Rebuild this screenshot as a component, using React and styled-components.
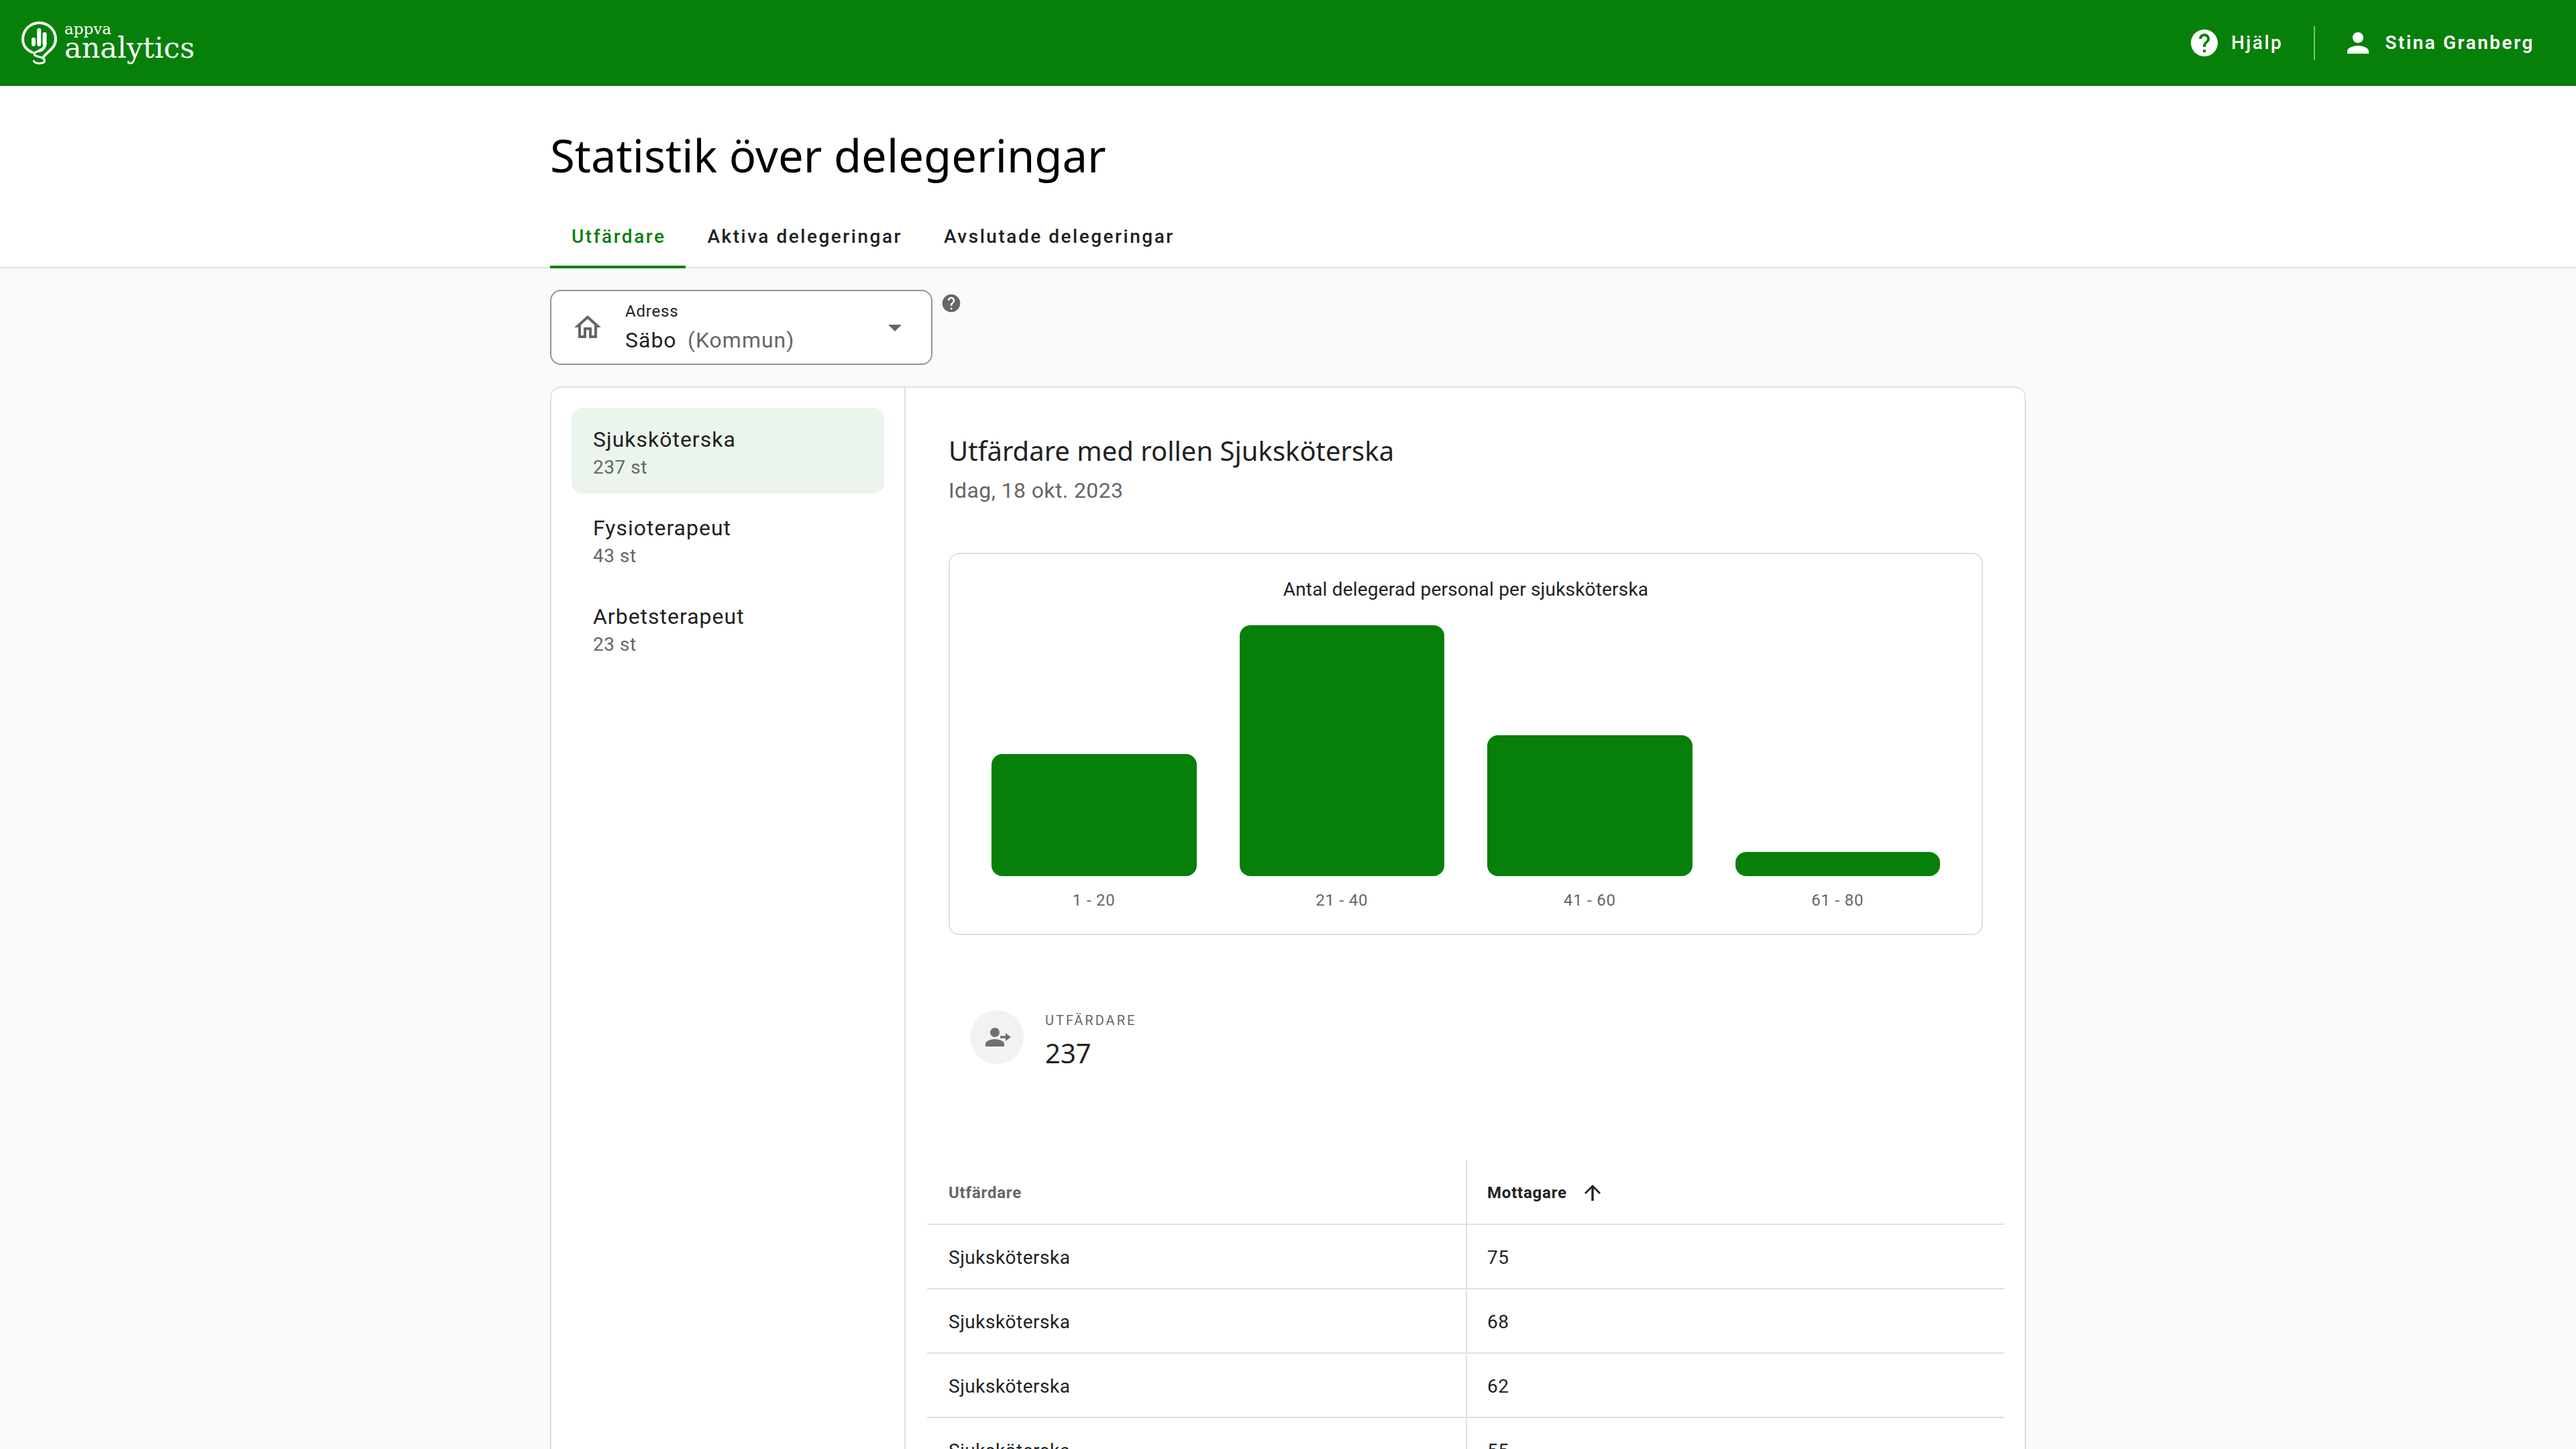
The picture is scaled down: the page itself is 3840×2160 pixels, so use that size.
import React from "react";
import styled, { createGlobalStyle } from "styled-components";
import { MdArrowDropDown, MdHelp, MdOutlineHome, MdPerson } from "react-icons/md";

const color = {
  brand: "#07800a",
  brandDark: "#06700a",
  line: "#e0e0e0",
  text: "#212121",
  muted: "#666666",
  page: "#fafafa",
  selected: "#ebf5eb",
};

const body = `Roboto, "Liberation Sans", sans-serif`;
const display = `"Noto Sans", "Open Sans", sans-serif`;

const GlobalStyle = createGlobalStyle`
  *, *::before, *::after { box-sizing: border-box; }
  html, body { margin: 0; background: ${color.page}; }
  body { font-family: ${body}; color: ${color.text}; }
  button, select { font: inherit; color: inherit; letter-spacing: inherit; border: 0; background: none; padding: 0; cursor: pointer; }
  h1, h2, h3, p, dl, dt, dd, figure, ul { margin: 0; padding: 0; }
  svg { display: block; flex: none; }
`;

const Page = styled.div`
  display: flex;
  flex-direction: column;
  height: 100vh;
  overflow: hidden auto;
  scrollbar-width: none;
`;

const TopBar = styled.header`
  display: flex;
  flex: none;
  align-items: center;
  justify-content: space-between;
  height: 128px;
  padding: 0 62px 0 32px;
  background: ${color.brand};
  box-shadow: inset 0 -2px ${color.brandDark};
  color: #fff;
`;

const Logo = styled.a`
  display: flex;
  gap: 10px;
  color: inherit;
  text-decoration: none;
  font-family: "DejaVu Serif", "Liberation Serif", serif;
`;

const LogoName = styled.span`
  display: flex;
  flex-direction: column;
`;

const LogoSmall = styled.span`
  font-size: 23px;
  line-height: 22px;
`;

const LogoLarge = styled.span`
  font-size: 43px;
  line-height: 34px;
`;

const UserNav = styled.nav`
  display: flex;
  align-items: center;
`;

const NavButton = styled.button`
  display: flex;
  align-items: center;
  gap: 16px;
  font-size: 28px;
  line-height: 48px;
  font-weight: ${(p) => (p.$strong ? 600 : 500)};
  letter-spacing: 0.09em;
`;

const NavDivider = styled.span`
  width: 2px;
  height: 50px;
  margin: 0 40px 0 46px;
  background: rgba(255, 255, 255, 0.5);
`;

const Container = styled.div`
  width: 100%;
  max-width: 2264px;
  margin: 0 auto;
  padding: 0 32px;
`;

const PageHead = styled.div`
  flex: none;
  padding-top: 64px;
  background: #fff;
  box-shadow: inset 0 -2px ${color.line};
`;

const PageTitle = styled.h1`
  font: 400 67px/78px ${display};
  color: #000;
`;

const Tabs = styled.div`
  display: flex;
  margin-top: 34px;
`;

const Tab = styled.button`
  height: 96px;
  padding: 0 30px 0 32px;
  font-size: 28px;
  font-weight: 500;
  letter-spacing: 0.09em;
  color: ${(p) => (p.$active ? color.brand : color.text)};
  box-shadow: inset 0 ${(p) => (p.$active ? "-4px" : "0")} ${color.brand};
`;

const Main = styled.main`
  padding: 32px 0;
`;

const FilterRow = styled.div`
  display: flex;
  gap: 12px;
  align-items: flex-start;
`;

const SelectField = styled.div`
  display: grid;
  grid-template-columns: 48px 1fr 48px;
  column-gap: 32px;
  align-items: center;
  width: 570px;
  height: 112px;
  padding: 0 30px;
  border: 2px solid #949494;
  border-radius: 16px;
  background: #fff;
  color: ${color.muted};
`;

const SelectBody = styled.div`
  display: flex;
  flex-direction: column;
  gap: 8px;
`;

const SelectLabel = styled.label`
  font-size: 24px;
  line-height: 30px;
  letter-spacing: 0.033em;
  color: ${color.text};
`;

const SelectValue = styled.div`
  display: flex;
  gap: 16px;
  font-size: 32px;
  line-height: 40px;
  letter-spacing: 0.031em;
`;

const Select = styled.select`
  appearance: none;
  height: 40px;
  color: ${color.text};
`;

const HelpButton = styled.button`
  margin-top: 4px;
  color: ${color.muted};
`;

const Panel = styled.section`
  display: grid;
  grid-template-columns: 528px 1fr;
  margin-top: 32px;
  border: 2px solid ${color.line};
  border-radius: 16px;
  background: #fff;
`;

const RoleList = styled.ul`
  display: flex;
  flex-direction: column;
  gap: 4px;
  padding: 30px;
  border-right: 2px solid ${color.line};
  list-style: none;
`;

const RoleButton = styled.button`
  display: flex;
  flex-direction: column;
  width: 100%;
  padding: 26px 32px 18px;
  border-radius: 16px;
  text-align: left;
  background: ${(p) => (p.$selected ? color.selected : "none")};
`;

const RoleName = styled.span`
  font-size: 32px;
  line-height: 42px;
  letter-spacing: 0.031em;
`;

const RoleCount = styled.span`
  font-size: 28px;
  line-height: 42px;
  letter-spacing: 0.018em;
  color: ${color.muted};
`;

const Content = styled.div`
  padding: 66px 30px 64px 32px;
`;

const Summary = styled.div`
  padding: 0 32px;
`;

const SectionTitle = styled.h2`
  font: 400 40px/56px ${display};
`;

const DateLine = styled.p`
  margin-top: 10px;
  font-size: 32px;
  line-height: 42px;
  letter-spacing: 0.012em;
  color: ${color.muted};
`;

const ChartCard = styled.figure`
  margin-top: 72px;
  padding: 32px 62px 34px;
  border: 2px solid ${color.line};
  border-radius: 16px;
`;

const ChartTitle = styled.figcaption`
  font-size: 28px;
  line-height: 42px;
  letter-spacing: 0.007em;
  text-align: center;
`;

const Bars = styled.div`
  display: grid;
  grid-template-columns: repeat(4, 1fr);
  column-gap: 64px;
  margin-top: 32px;
`;

const BarColumn = styled.div`
  display: flex;
  flex-direction: column;
  gap: 20px;
`;

const BarTrack = styled.div`
  display: flex;
  align-items: flex-end;
  height: 374px;
`;

const Bar = styled.div`
  width: 100%;
  border-radius: 16px;
  background: ${color.brand};
`;

const BarLabel = styled.span`
  font-size: 24px;
  line-height: 32px;
  letter-spacing: 0.033em;
  text-align: center;
  color: ${color.muted};
`;

const Stat = styled.div`
  display: flex;
  align-items: flex-start;
  gap: 32px;
  margin-top: 112px;
  padding-left: 32px;
`;

const StatIcon = styled.span`
  width: 80px;
  height: 80px;
  border-radius: 50%;
  background: #f2f2f2;
  color: #707070;
`;

const StatText = styled.dl`
  display: flex;
  flex-direction: column;
  gap: 8px;
`;

const StatLabel = styled.dt`
  font-size: 20px;
  line-height: 30px;
  letter-spacing: 0.15em;
  text-transform: uppercase;
  color: ${color.muted};
`;

const StatValue = styled.dd`
  font: 400 40px/52px ${display};
`;

const Table = styled.table`
  width: 100%;
  margin-top: 134px;
  table-layout: fixed;
  border-collapse: separate;
  border-spacing: 0;
  text-align: left;

  th, td {
    height: 96px;
    padding: 2px 32px 0;
    border-bottom: 2px solid ${color.line};
  }
  th + th, td + td {
    padding-left: 30px;
    border-left: 2px solid ${color.line};
  }
`;

const HeadCell = styled.th`
  font-size: 24px;
  font-weight: 700;
  letter-spacing: 0.033em;
  color: ${(p) => (p.$sorted ? color.text : color.muted)};
`;

const SortButton = styled.button`
  display: flex;
  align-items: center;
  gap: 26px;
`;

const Cell = styled.td`
  font-size: 28px;
  letter-spacing: 0.018em;
`;

const LogoMark = () => (
  <svg width="54" height="64" viewBox="8 8 54 64" fill="none" stroke="currentColor" strokeLinecap="round">
    <path strokeWidth="4" d="M40.500 61.500C46 53 59 48 59 34.500A24.500 24.500 0 1 0 10 34.500C10 44 16 50.500 24 54" />
    <path strokeWidth="6" d="M26 35v7M34.200 21v21M42.500 27v14" />
    <path strokeWidth="4.500" d="M43.300 40C43.300 47 40 50 35 51.500" />
    <path strokeWidth="3" d="M37 51C31 53 27 53.500 27 56.500C27 61.500 42.500 60 42.500 66C42.500 72 28 71.500 26.500 67" />
  </svg>
);

const AssignIcon = () => (
  <svg width="80" height="80" viewBox="0 0 80 80" fill="currentColor">
    <circle cx="37" cy="33" r="7" />
    <path d="M23 54v-4c0-4.600 9.300-7 14-7s14 2.400 14 7v4z" />
    <path d="M45 38.300h8V34l8 6-8 6v-4.200h-8z" />
  </svg>
);

const SortArrow = () => (
  <svg width="24" height="24" viewBox="0 0 24 24" fill="none" stroke="currentColor">
    <path strokeWidth="2.800" d="M1 13L12 2L23 13" />
    <path strokeWidth="3.400" d="M12 2V24" />
  </svg>
);

const tabs = ["Utfärdare", "Aktiva delegeringar", "Avslutade delegeringar"];

const roles = [
  { name: "Sjuksköterska", count: 237 },
  { name: "Fysioterapeut", count: 43 },
  { name: "Arbetsterapeut", count: 23 },
];

const groups = [
  { label: "1 - 20", value: 182 },
  { label: "21 - 40", value: 374 },
  { label: "41 - 60", value: 210 },
  { label: "61 - 80", value: 36 },
];
const largest = Math.max(...groups.map((g) => g.value));

const rows = [75, 68, 62, 55];

export default function App() {
  return (
    <Page>
      <GlobalStyle />
      <TopBar>
        <Logo href="#">
          <LogoMark />
          <LogoName>
            <LogoSmall>appva</LogoSmall>
            <LogoLarge>analytics</LogoLarge>
          </LogoName>
        </Logo>
        <UserNav>
          <NavButton>
            <MdHelp size={48} />
            Hjälp
          </NavButton>
          <NavDivider />
          <NavButton $strong>
            <MdPerson size={48} />
            Stina Granberg
          </NavButton>
        </UserNav>
      </TopBar>

      <PageHead>
        <Container>
          <PageTitle>Statistik över delegeringar</PageTitle>
          <Tabs role="tablist">
            {tabs.map((tab, i) => (
              <Tab key={tab} role="tab" aria-selected={i === 0} $active={i === 0}>
                {tab}
              </Tab>
            ))}
          </Tabs>
        </Container>
      </PageHead>

      <Main>
        <Container>
          <FilterRow>
            <SelectField>
              <MdOutlineHome size={48} />
              <SelectBody>
                <SelectLabel htmlFor="address">Adress</SelectLabel>
                <SelectValue>
                  <Select id="address" defaultValue="sabo">
                    <option value="sabo">Säbo</option>
                  </Select>
                  <span>(Kommun)</span>
                </SelectValue>
              </SelectBody>
              <MdArrowDropDown size={48} />
            </SelectField>
            <HelpButton aria-label="Hjälp">
              <MdHelp size={32} />
            </HelpButton>
          </FilterRow>

          <Panel>
            <RoleList>
              {roles.map((role, i) => (
                <li key={role.name}>
                  <RoleButton $selected={i === 0}>
                    <RoleName>{role.name}</RoleName>
                    <RoleCount>{role.count} st</RoleCount>
                  </RoleButton>
                </li>
              ))}
            </RoleList>

            <Content>
              <Summary>
                <SectionTitle>Utfärdare med rollen Sjuksköterska</SectionTitle>
                <DateLine>Idag, 18 okt. 2023</DateLine>

                <ChartCard>
                  <ChartTitle>Antal delegerad personal per sjuksköterska</ChartTitle>
                  <Bars>
                    {groups.map((group) => (
                      <BarColumn key={group.label}>
                        <BarTrack>
                          <Bar style={{ height: `${(group.value / largest) * 100}%` }} />
                        </BarTrack>
                        <BarLabel>{group.label}</BarLabel>
                      </BarColumn>
                    ))}
                  </Bars>
                </ChartCard>

                <Stat>
                  <StatIcon>
                    <AssignIcon />
                  </StatIcon>
                  <StatText>
                    <StatLabel>Utfärdare</StatLabel>
                    <StatValue>237</StatValue>
                  </StatText>
                </Stat>
              </Summary>

              <Table>
                <thead>
                  <tr>
                    <HeadCell>Utfärdare</HeadCell>
                    <HeadCell $sorted aria-sort="ascending">
                      <SortButton>
                        Mottagare
                        <SortArrow />
                      </SortButton>
                    </HeadCell>
                  </tr>
                </thead>
                <tbody>
                  {rows.map((receivers) => (
                    <tr key={receivers}>
                      <Cell>Sjuksköterska</Cell>
                      <Cell>{receivers}</Cell>
                    </tr>
                  ))}
                </tbody>
              </Table>
            </Content>
          </Panel>
        </Container>
      </Main>
    </Page>
  );
}
